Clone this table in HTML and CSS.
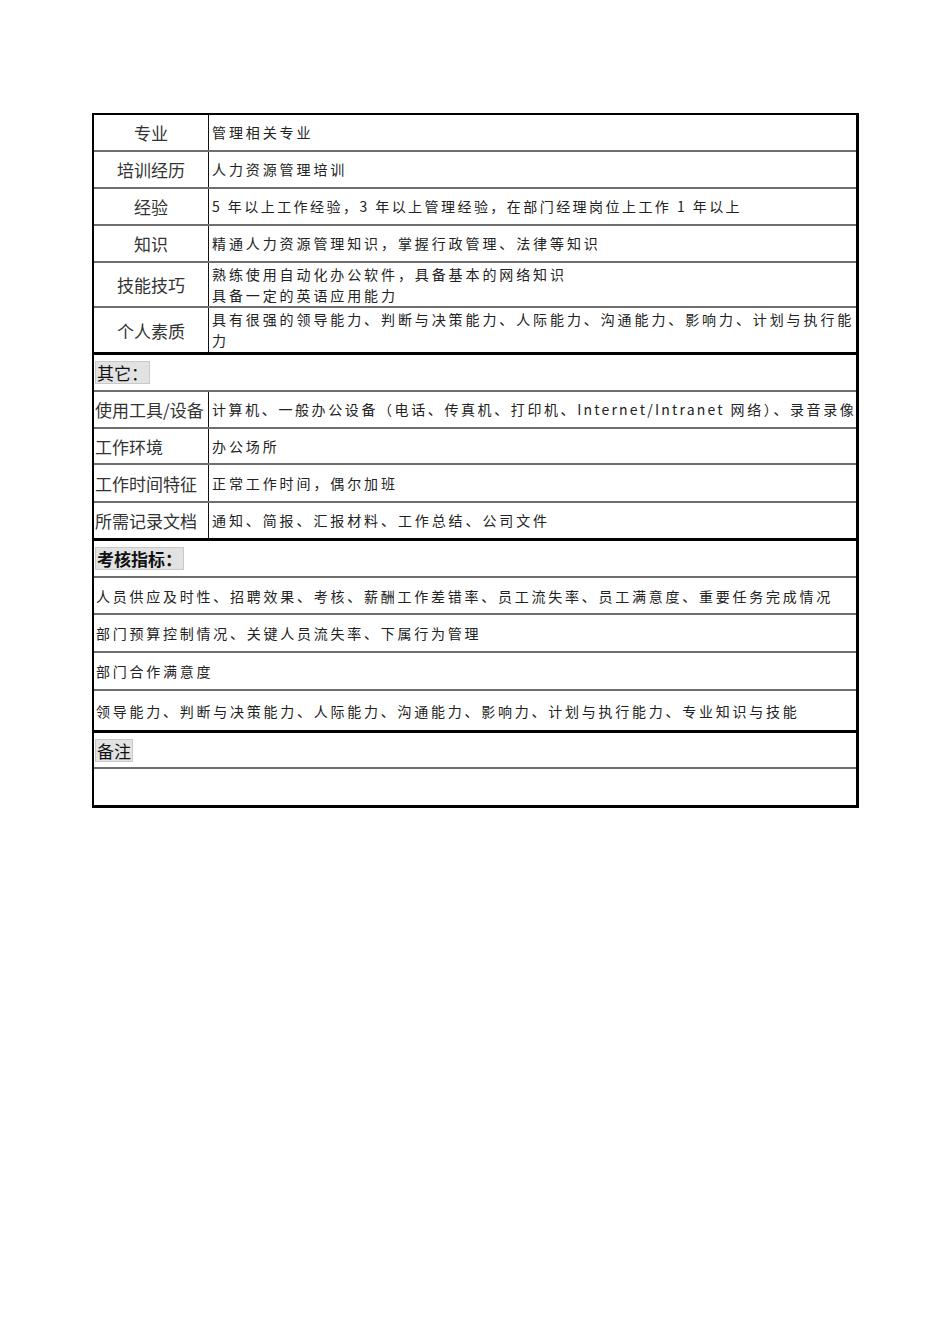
FILE: index.html
```html
<!DOCTYPE html>
<html lang="zh-CN">
<head>
<meta charset="utf-8">
<title>岗位说明书</title>
<link rel="stylesheet" href="styles.css">
</head>
<body>
<div class="sheet">
  <section class="block">
    <div class="row"><div class="label center">专业</div><div class="val"><span>管理相关专业</span></div></div>
    <div class="row"><div class="label center">培训经历</div><div class="val"><span>人力资源管理培训</span></div></div>
    <div class="row"><div class="label center">经验</div><div class="val narrow"><span>5 年以上工作经验，3 年以上管理经验，在部门经理岗位上工作 1 年以上</span></div></div>
    <div class="row"><div class="label center">知识</div><div class="val"><span>精通人力资源管理知识，掌握行政管理、法律等知识</span></div></div>
    <div class="row h45"><div class="label center">技能技巧</div><div class="val"><span>熟练使用自动化办公软件，具备基本的网络知识<br>具备一定的英语应用能力</span></div></div>
    <div class="row h44"><div class="label center">个人素质</div><div class="val"><span>具有很强的领导能力、判断与决策能力、人际能力、沟通能力、影响力、计划与执行能<br>力</span></div></div>
  </section>
  <section class="block">
    <div class="head"><span class="tag">其它：</span></div>
    <div class="row"><div class="label">使用工具/设备</div><div class="val nowrap"><span>计算机、一般办公设备（电话、传真机、打印机、<span class="latin">Internet/Intranet</span> 网络）、录音录像</span></div></div>
    <div class="row h36"><div class="label">工作环境</div><div class="val"><span>办公场所</span></div></div>
    <div class="row h38"><div class="label">工作时间特征</div><div class="val"><span>正常工作时间，偶尔加班</span></div></div>
    <div class="row h35"><div class="label">所需记录文档</div><div class="val"><span>通知、简报、汇报材料、工作总结、公司文件</span></div></div>
  </section>
  <section class="block">
    <div class="head"><span class="tag strong">考核指标：</span></div>
    <div class="line">人员供应及时性、招聘效果、考核、薪酬工作差错率、员工流失率、员工满意度、重要任务完成情况</div>
    <div class="line h38">部门预算控制情况、关键人员流失率、下属行为管理</div>
    <div class="line h38">部门合作满意度</div>
    <div class="line h39">领导能力、判断与决策能力、人际能力、沟通能力、影响力、计划与执行能力、专业知识与技能</div>
  </section>
  <section class="block">
    <div class="head h36"><span class="tag">备注</span></div>
    <div class="line h36"></div>
  </section>
</div>
</body>
</html>
```

FILE: styles.css
```css
* { box-sizing: border-box; }

body {
  margin: 0;
  background: #ffffff;
  font-family: "Noto Sans CJK SC", "Liberation Sans", sans-serif;
  color: #1c1c1c;
}

.sheet {
  margin: 113px 0 0 92px;
  width: 767px;
  border: 2px solid #000;
  border-right-width: 3px;
  border-bottom-width: 3px;
}

.block {
  border-bottom: 3px solid #000;
}

.block:last-child {
  border-bottom: 0;
}

.row {
  display: flex;
  height: 37px;
  border-bottom: 2px solid #6f6f6f;
}

.label {
  flex: none;
  width: 115px;
  border-right: 1px solid #111;
  display: flex;
  align-items: center;
  padding-left: 1px;
  font-size: 17px;
  white-space: nowrap;
  color: #333;
}

.label.center {
  justify-content: center;
  padding-left: 0;
}

.val {
  flex: 1;
  display: flex;
  align-items: center;
  padding-left: 3px;
  font-size: 14px;
  line-height: 21px;
  letter-spacing: 2.9px;
  color: #222;
}

.val.narrow {
  letter-spacing: 2.45px;
}

.val.nowrap {
  white-space: nowrap;
  letter-spacing: 2.6px;
}

.latin {
  letter-spacing: 2.2px;
}

.head {
  height: 37px;
  display: flex;
  align-items: center;
  padding-left: 1px;
  border-bottom: 2px solid #6f6f6f;
}

.tag {
  background: #e2e2e2;
  border: 1px solid #c9c9c9;
  font-size: 17px;
  line-height: 21px;
  padding: 0 1px;
  color: #111;
}

.tag.strong {
  font-weight: 700;
}

.line {
  height: 37px;
  display: flex;
  align-items: center;
  padding-left: 2px;
  font-size: 14px;
  letter-spacing: 2.75px;
  color: #222;
  border-bottom: 2px solid #6f6f6f;
}

.block > :last-child {
  border-bottom: 0;
}

.h35 { height: 35px; }
.h36 { height: 36px; }
.h38 { height: 38px; }
.h39 { height: 39px; }
.h44 { height: 44px; }
.h45 { height: 45px; }
```
